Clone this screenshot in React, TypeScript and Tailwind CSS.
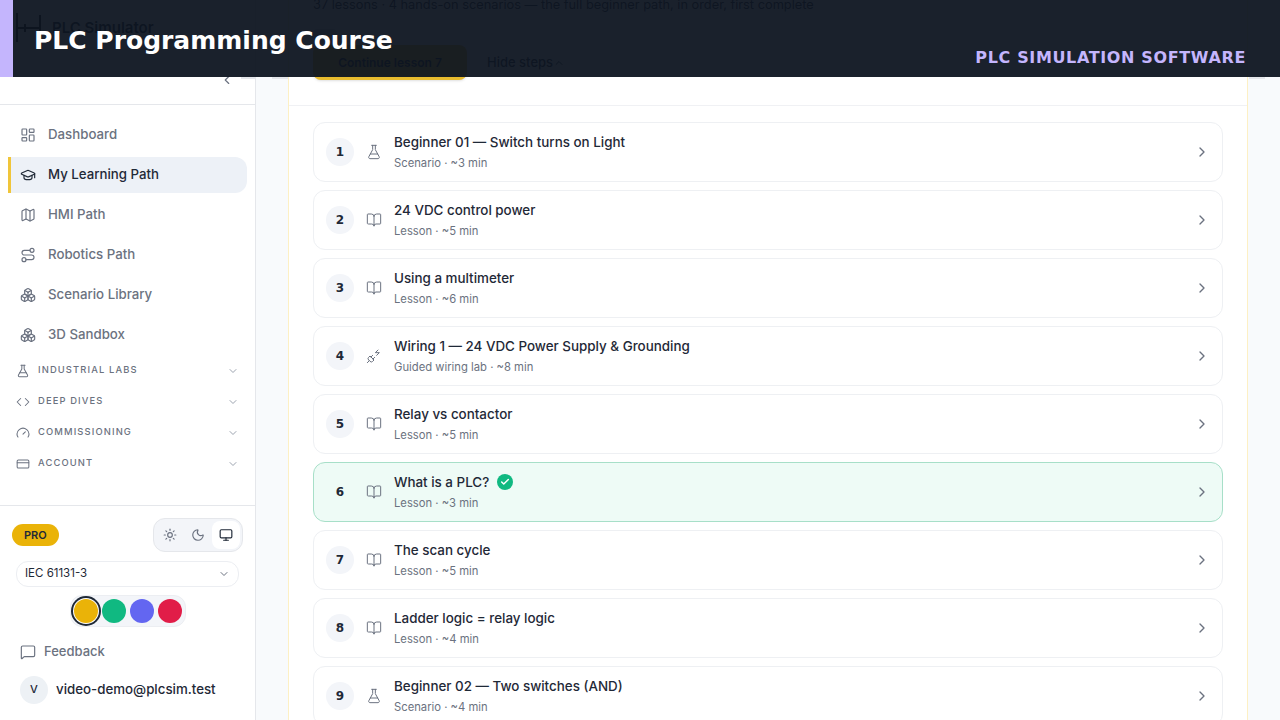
import { BookOpen, ChevronDown, ChevronLeft, ChevronRight, ChevronUp, Code, CreditCard, FlaskConical, Gauge, GraduationCap, LayoutDashboard, Map, MessageSquare, Monitor, Moon, PlugZap, Route, Boxes, Sun, Check } from "lucide-react";

const F = "font-['Inter','Liberation_Sans',sans-serif]";

const nav = [
  { label: "Dashboard", Icon: LayoutDashboard },
  { label: "My Learning Path", Icon: GraduationCap, active: true },
  { label: "HMI Path", Icon: Map },
  { label: "Robotics Path", Icon: Route },
  { label: "Scenario Library", Icon: Boxes },
  { label: "3D Sandbox", Icon: Boxes },
];
const groups = [
  { label: "INDUSTRIAL LABS", Icon: FlaskConical },
  { label: "DEEP DIVES", Icon: Code },
  { label: "COMMISSIONING", Icon: Gauge },
  { label: "ACCOUNT", Icon: CreditCard },
];
const steps = [
  { t: "Beginner 01 — Switch turns on Light", s: "Scenario · ~3 min", Icon: FlaskConical },
  { t: "24 VDC control power", s: "Lesson · ~5 min", Icon: BookOpen },
  { t: "Using a multimeter", s: "Lesson · ~6 min", Icon: BookOpen },
  { t: "Wiring 1 — 24 VDC Power Supply & Grounding", s: "Guided wiring lab · ~8 min", Icon: PlugZap },
  { t: "Relay vs contactor", s: "Lesson · ~5 min", Icon: BookOpen },
  { t: "What is a PLC?", s: "Lesson · ~3 min", Icon: BookOpen, done: true },
  { t: "The scan cycle", s: "Lesson · ~5 min", Icon: BookOpen },
  { t: "Ladder logic = relay logic", s: "Lesson · ~4 min", Icon: BookOpen },
  { t: "Beginner 02 — Two switches (AND)", s: "Scenario · ~4 min", Icon: FlaskConical },
];

export default function App() {
  return (
    <div className={`relative flex h-[720px] w-[1280px] overflow-hidden bg-[#f8fafc] ${F}`}>
      <aside className="flex h-full w-[256px] shrink-0 flex-col border-r border-[#e5e7eb] bg-white">
        <div className="relative h-[105px] shrink-0 border-b border-[#e5e7eb]">
          <ChevronLeft className="absolute left-[220px] top-[73px] h-3.5 w-3.5 text-[#6b7280]" />
          <div className="flex items-center gap-[10px] pl-[16px] pt-[13px]">
            <svg width="26" height="30" viewBox="0 0 26 30" fill="none" stroke="#111" strokeWidth="2"><path d="M1 0v29M24 2v16M1 15h23M9 11v8" /></svg>
            <span className="text-[15px] font-semibold text-[#111827]">PLC Simulator</span>
          </div>
        </div>
        <nav className="flex flex-col gap-1 px-2 pt-[12px]">
          {nav.map(({ label, Icon, active }) => (
            <div key={label} className={`flex h-9 w-[239px] items-center gap-3 rounded-r-xl border-l-[3px] pl-[9px] text-[13.25px] font-medium ${active ? "border-[#f0c53a] bg-[#edf1f7] text-[#1f2937]" : "border-transparent text-[#6b7280]"}`}>
              <Icon className={`h-4 w-4 ${active ? "text-[#1f2937]" : "text-[#6b7280]"}`} strokeWidth={1.75} />
              {label}
            </div>
          ))}
        </nav>
        <div className="flex flex-col gap-[11px] px-4 pt-[8px]">
          {groups.map(({ label, Icon }) => (
            <div key={label} className="flex h-5 items-center">
              <Icon className="h-3.5 w-3.5 text-[#6b7280]" strokeWidth={1.75} />
              <span className="ml-2 flex-1 pb-px text-[9.4px] font-medium tracking-[0.12em] text-[#6b7280]">{label}</span>
              <ChevronDown className="h-3 w-3 text-[#9ca3af]" />
            </div>
          ))}
        </div>
        <div className="mt-auto flex h-[215px] flex-col border-t border-[#e5e7eb] pt-[12px]">
          <div className="flex items-center justify-between pl-3 pr-[12px]">
            <span className="rounded-full bg-[#eab308] px-[12px] py-[3px] text-[11px] font-semibold text-[#1f2937]">PRO</span>
            <div className="flex h-[34px] w-[90px] items-center rounded-xl border border-[#e5e7eb] bg-[#f3f5f9] p-0.5">
              <div className="flex flex-1 justify-center"><Sun className="h-3.5 w-3.5 text-[#6b7280]" /></div>
              <div className="flex flex-1 justify-center"><Moon className="h-3.5 w-3.5 text-[#6b7280]" /></div>
              <div className="flex h-7 flex-1 items-center justify-center rounded-lg bg-white"><Monitor className="h-3.5 w-3.5 text-[#1f2937]" /></div>
            </div>
          </div>
          <div className="mx-4 mt-[9px] flex h-[26px] items-center justify-between rounded-xl border border-[#eceef2] px-2 text-[11.5px] text-[#1f2937]">
            IEC 61131-3
            <ChevronDown className="h-3 w-3 text-[#6b7280]" />
          </div>
          <div className="mt-[8px] flex justify-center">
            <div className="flex items-center gap-1 rounded-xl border border-[#eceef2] bg-[#f3f5f9] px-[3px] py-[3px]">
              <span className="h-6 w-6 rounded-full bg-[#eab308] ring-2 ring-[#1f2937] ring-offset-1 ring-offset-white" />
              <span className="h-6 w-6 rounded-full bg-[#10b981]" />
              <span className="h-6 w-6 rounded-full bg-[#6366f1]" />
              <span className="h-6 w-6 rounded-full bg-[#e11d48]" />
            </div>
          </div>
          <div className="mt-[15px] flex items-center gap-2 pl-5 text-[13px] font-medium text-[#6b7280]">
            <MessageSquare className="h-4 w-4" strokeWidth={1.75} />
            Feedback
          </div>
          <div className="mt-[14px] flex items-center gap-2 pl-5 text-[13.3px] font-medium text-[#1f2937]">
            <span className="flex h-7 w-7 items-center justify-center rounded-full bg-[#edf1f5] text-[11px]">V</span>
            video-demo@plcsim.test
          </div>
        </div>
      </aside>

      <main className="flex h-full min-w-0 flex-1 flex-col px-8">
        <section className="flex w-[960px] flex-1 flex-col border-x border-[#fdf0c4] bg-white">
          <div className="flex h-[106px] shrink-0 flex-col border-b border-[#f0f1f4] px-6">
            <p className="mt-[-5px] whitespace-nowrap text-[12.8px] text-[#1f2937]">37 lessons · 4 hands-on scenarios — the full beginner path, in order, first complete</p>
            <span className="mt-[15px] h-2 w-6 rounded bg-[#d1d5db]" />
            <div className="mt-[8px] flex items-center gap-5">
              <span className="flex h-[35px] w-[154px] items-center justify-center rounded-lg bg-[#e9bc2e] text-xs font-semibold text-[#111827] shadow-sm">Continue lesson 7</span>
              <span className="flex items-center text-[13px] font-medium text-[#1f2937]">Hide steps<ChevronUp className="h-3 w-3" /></span>
            </div>
          </div>
          <div className="flex flex-col gap-2 px-6 pt-[16px]">
            {steps.map(({ t, s, Icon, done }, i) => (
              <div key={t} className={`flex h-[60px] shrink-0 items-center rounded-xl border pl-[12px] pr-3 ${done ? "border-[#a7dfc8] bg-[#eefbf6]" : "border-[#eef0f3] bg-white"}`}>
                <span className={`flex h-7 w-7 shrink-0 items-center justify-center rounded-full font-['DejaVu_Sans',sans-serif] text-xs font-bold text-[#1f2937] ${done ? "" : "bg-[#f3f5f9]"}`}>{i + 1}</span>
                <Icon className="ml-[12px] h-4 w-4 shrink-0 text-[#6b7280]" strokeWidth={1.5} />
                <div className="ml-3 flex-1">
                  <div className="flex items-center gap-2 text-[13.4px] font-medium leading-[20px] text-[#1f2937]">
                    {t}
                    {done && <span className="flex h-4 w-4 items-center justify-center rounded-full bg-[#10b981]"><Check className="h-2.5 w-2.5 text-white" strokeWidth={3.5} /></span>}
                  </div>
                  <div className="pt-px text-[11.25px] leading-[20px] text-[#6b7280]">{s}</div>
                </div>
                <ChevronRight className="h-4 w-4 text-[#6b7280]" />
              </div>
            ))}
          </div>
        </section>
      </main>

      <span className="absolute left-[241px] top-[77px] h-0.5 w-[14px] bg-[#e5e7eb]" />
      <span className="absolute left-[272px] top-[77px] h-0.5 w-[16px] bg-[#e5e7eb]" />
      <span className="absolute left-[1249px] top-[77px] h-0.5 w-[16px] bg-[#e5e7eb]" />

      <div className="absolute inset-x-0 top-0 flex h-[77px] border-l-[13px] border-[#c4b5fd] bg-[#0e1521]/95 font-['DejaVu_Sans',sans-serif]">
        <div className="flex-1 pl-[21px] pt-[25px] text-[25px] font-bold leading-[32px] text-white">PLC Programming Course</div>
        <div className="pr-[34px] pt-[47px] text-base font-bold leading-[22px] tracking-[0.04em] text-[#c4b5fd]">PLC SIMULATION SOFTWARE</div>
      </div>
    </div>
  );
}
